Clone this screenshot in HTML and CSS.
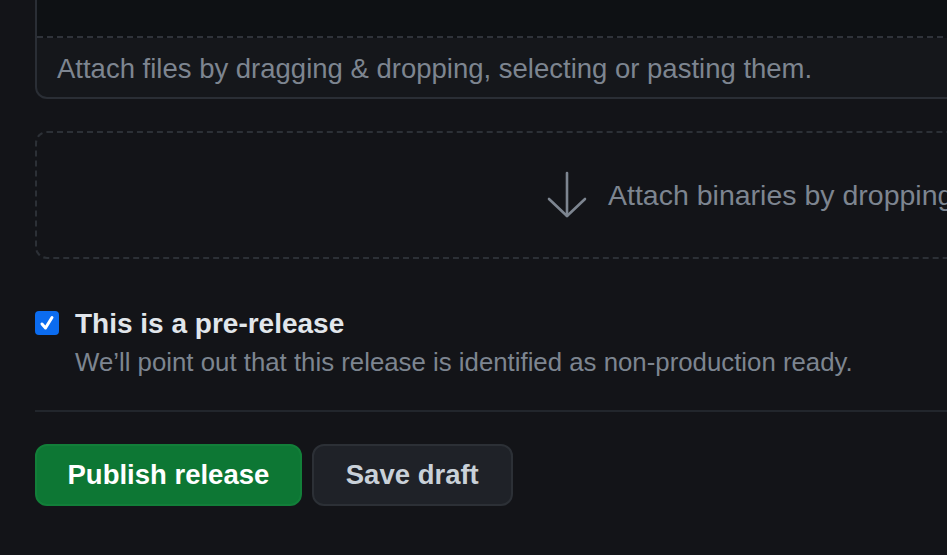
FILE: index.html
```html
<!DOCTYPE html>
<html>
<head>
<meta charset="utf-8">
<link rel="stylesheet" href="styles.css">
</head>
<body>
<div class="page">
  <div class="editor">
    <div class="editor-area"></div>
    <div class="editor-foot">Attach files by dragging &amp; dropping, selecting or pasting them.</div>
  </div>

  <div class="dropzone">
    <svg class="arrow" width="44" height="50" viewBox="0 0 44 50" fill="none" stroke="#7d8590" stroke-width="2.6" stroke-linecap="round" stroke-linejoin="round">
      <path d="M22 3 V46"/>
      <path d="M4 29 L22 46 L40 29"/>
    </svg>
    <span class="drop-text">Attach binaries by dropping them here or selecting them.</span>
  </div>

  <label class="check">
    <span class="box">
      <svg width="18" height="18" viewBox="0 0 18 18" fill="none" stroke="#fff" stroke-width="3" stroke-linecap="round" stroke-linejoin="round"><path d="M4 10 L7.5 14 L14 3.5"/></svg>
    </span>
    <span class="check-text">
      <span class="check-title">This is a pre-release</span>
      <span class="check-note">We’ll point out that this release is identified as non-production ready.</span>
    </span>
  </label>

  <div class="divider"></div>

  <div class="actions">
    <button class="btn primary">Publish release</button>
    <button class="btn">Save draft</button>
  </div>
</div>
</body>
</html>
```

FILE: styles.css
```css
html, body {
  margin: 0;
  padding: 0;
  background: #131418;
  overflow: hidden;
  font-family: "Liberation Sans", Arial, sans-serif;
}

.page {
  width: 1400px;
  padding-left: 35px;
}

.editor {
  border: 2px solid #2a2e35;
  border-top: none;
  border-radius: 0 0 12px 12px;
  background: #15171b;
}

.editor-area {
  height: 36px;
  background: #0e1114;
  border-bottom: 2px dashed #2f333a;
}

.editor-foot {
  height: 59px;
  display: flex;
  align-items: center;
  padding: 3px 0 0 20px;
  box-sizing: border-box;
  color: #7d8590;
  font-size: 27.5px;
}

.dropzone {
  margin-top: 32px;
  height: 124px;
  border: 2px dashed #2c3036;
  border-radius: 12px;
  display: flex;
  align-items: center;
  padding-left: 508px;
  gap: 19px;
}

.arrow {
  flex: none;
}

.drop-text {
  color: #7d8590;
  font-size: 28.5px;
  white-space: nowrap;
}

.check {
  margin-top: 52px;
  display: flex;
  align-items: flex-start;
  gap: 16px;
}

.box {
  width: 24px;
  height: 24px;
  border-radius: 4px;
  background: #0b6cf0;
  display: flex;
  align-items: center;
  justify-content: center;
  flex: none;
}

.check-text {
  display: flex;
  flex-direction: column;
}

.check-title {
  color: #e1e6eb;
  font-weight: bold;
  font-size: 28px;
  line-height: 26px;
}

.check-note {
  margin-top: 11px;
  color: #7d8590;
  font-size: 25.8px;
  line-height: 28px;
}

.divider {
  margin-top: 34px;
  height: 2px;
  background: #22262c;
}

.actions {
  margin-top: 32px;
  display: flex;
  gap: 10px;
}

.btn {
  height: 62px;
  padding: 0 32px;
  border-radius: 12px;
  border: 2px solid #2c3036;
  background: #1f2228;
  color: #c9d1d9;
  font-family: "Liberation Sans", Arial, sans-serif;
  font-weight: bold;
  font-size: 27.5px;
}

.btn.primary {
  padding: 0 30.5px;
  background: #0d7734;
  border-color: #127f39;
  color: #ffffff;
}
```
